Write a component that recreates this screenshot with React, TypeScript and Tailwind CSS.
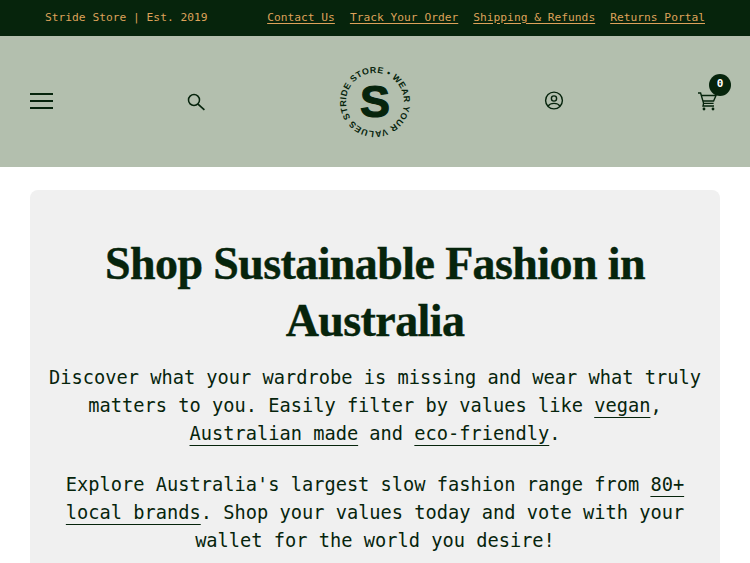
const links = ['Contact Us', 'Track Your Order', 'Shipping & Refunds', 'Returns Portal'];

function Logo() {
  return (
    <svg viewBox="0 0 72 72" className="w-[72px] h-[72px]">
      <defs>
        <path id="ring" d="M7 36 a29 29 0 1 1 58 0 a29 29 0 1 1 -58 0" />
      </defs>
      <g transform="rotate(-33 36 36)">
        <text fill="#06240c" fontSize="8.8" fontWeight="700" fontFamily="'Liberation Sans', sans-serif" letterSpacing="0.45">
          <textPath href="#ring">STRIDE STORE • WEAR YOUR VALUES •</textPath>
        </text>
      </g>
      <text x="36" y="50.5" textAnchor="middle" fill="#06240c" stroke="#06240c" strokeWidth="1.2" fontSize="45" fontWeight="700" fontFamily="'Liberation Sans', sans-serif">S</text>
    </svg>
  );
}

function SearchIcon() {
  return (
    <svg viewBox="0 0 24 24" className="h-6 w-6" fill="none" stroke="#06240c" strokeWidth="1.5">
      <circle cx="9" cy="10" r="5.5" />
      <path d="M13 14.2l6.4 5.6" strokeWidth="1.7" />
    </svg>
  );
}

function AccountIcon() {
  return (
    <svg viewBox="0 0 24 24" className="h-6 w-6" fill="none" stroke="#06240c" strokeWidth="1.4">
      <circle cx="12" cy="10.5" r="8.4" />
      <circle cx="12" cy="8.5" r="2.6" />
      <path d="M6 16.2C7.5 14 10 13.4 12 13.4s4.5.6 6 2.8" />
    </svg>
  );
}

function CartIcon() {
  return (
    <svg viewBox="0 0 24 24" className="h-6 w-6" fill="none" stroke="#06240c" strokeWidth="1.4">
      <path d="M2 3h2.6l3 10.4h10" />
      <path d="M5 5.5h15l-2.4 5.5H7" />
      <path d="M7.6 13.4L7 16h11" />
      <circle cx="8" cy="19" r="1.4" fill="#06240c" stroke="none" />
      <circle cx="17" cy="19" r="1.4" fill="#06240c" stroke="none" />
    </svg>
  );
}

function TextLink({ children }: { children: string }) {
  return <a className="underline underline-offset-[5px] decoration-1" href="#">{children}</a>;
}

export default function App() {
  return (
    <div className="h-[563px] overflow-hidden bg-white font-['DejaVu_Sans_Mono',monospace] text-[#06240c]">
      {/* Top bar */}
      <div className="flex h-9 items-center justify-between bg-[#06240c] px-[45px] text-[11.25px] text-[#dda25a]">
        <span>Stride Store | Est. 2019</span>
        <nav className="flex gap-[15px]">
          {links.map((link) => (
            <a key={link} href="#" className="underline underline-offset-2">{link}</a>
          ))}
        </nav>
      </div>

      {/* Main header */}
      <header className="flex h-[131px] items-center justify-between bg-[#b3bfae] px-[30px]">
        <button className="mb-0.5 flex w-6 flex-col gap-[5px]">
          <span className="h-0.5 w-[23px] bg-[#06240c]" />
          <span className="h-0.5 w-[23px] bg-[#06240c]" />
          <span className="h-0.5 w-[23px] bg-[#06240c]" />
        </button>
        <SearchIcon />
        <Logo />
        <AccountIcon />
        <div className="relative h-6 w-6">
          <CartIcon />
          <span className="absolute left-[13px] top-[-16px] flex h-[22px] w-[22px] items-center justify-center rounded-full bg-[#06240c] text-[11px] font-bold text-white">0</span>
        </div>
      </header>

      {/* Intro card */}
      <main className="px-[30px] pt-[23px]">
        <div className="rounded-lg bg-[#f0f0f0] px-[15px] pb-10 pt-[45px] text-center text-[18.68px] leading-[28px]">
          <h1 className="mb-[15px] font-['Liberation_Serif',serif] text-[46px] font-bold leading-[57px] tracking-[-0.6px] [-webkit-text-stroke:0.4px_#06240c]">
            Shop Sustainable Fashion in Australia
          </h1>
          <p className="mb-[23px]">
            Discover what your wardrobe is missing and wear what truly matters to you. Easily filter by values like <TextLink>vegan</TextLink>, <TextLink>Australian made</TextLink> and <TextLink>eco-friendly</TextLink>.
          </p>
          <p>
            Explore Australia's largest slow fashion range from <TextLink>80+ local brands</TextLink>. Shop your values today and vote with your wallet for the world you desire!
          </p>
        </div>
      </main>
    </div>
  );
}
